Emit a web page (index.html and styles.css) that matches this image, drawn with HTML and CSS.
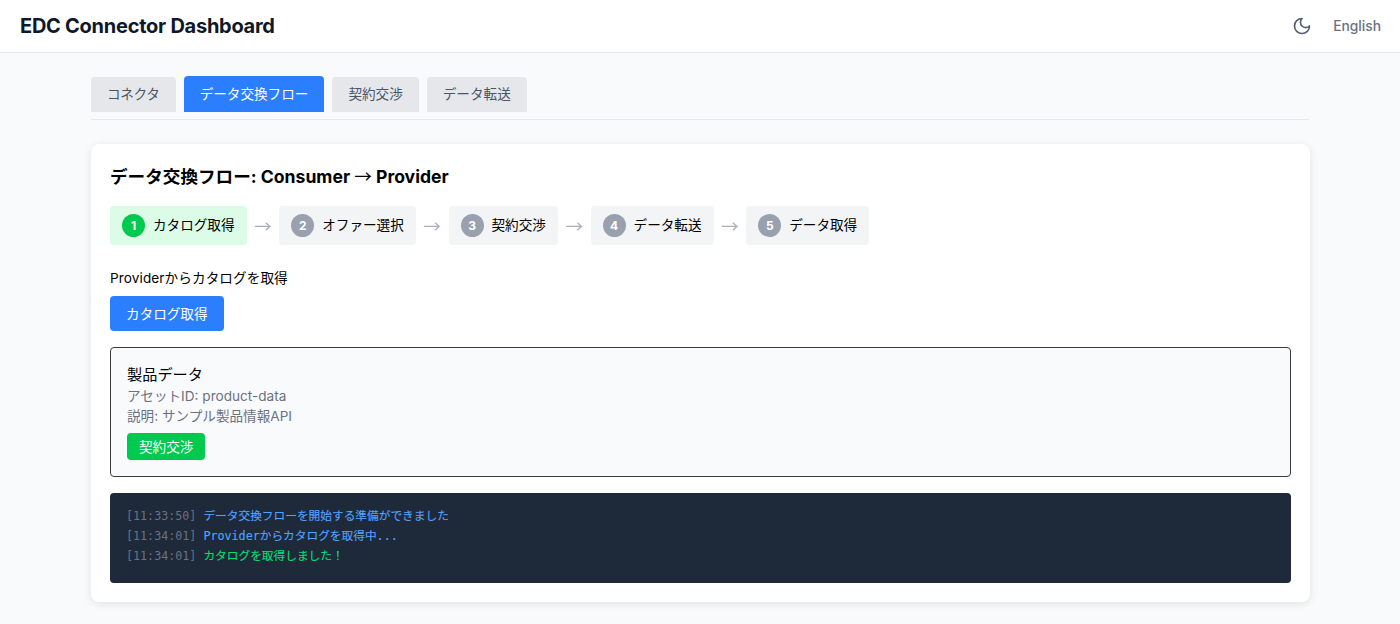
FILE: index.html
```html
<!DOCTYPE html>
<html lang="ja">
<head>
<meta charset="utf-8">
<title>EDC Connector Dashboard</title>
<link rel="stylesheet" href="styles.css">
</head>
<body>
<header class="header">
  <h1 class="brand">EDC Connector Dashboard</h1>
  <div class="header-actions">
    <svg class="moon" viewBox="0 0 24 24" width="20" height="20" fill="none" stroke="currentColor" stroke-width="2" stroke-linecap="round" stroke-linejoin="round"><path d="M12 3a6 6 0 0 0 9 9 9 9 0 1 1-9-9Z"/></svg>
    <span class="lang">English</span>
  </div>
</header>
<main class="main">
  <nav class="tabs">
    <button class="tab">コネクタ</button>
    <button class="tab tab-active">データ交換フロー</button>
    <button class="tab">契約交渉</button>
    <button class="tab">データ転送</button>
  </nav>
  <section class="card">
    <h2 class="card-title">データ交換フロー: Consumer <span class="thin-arrow">→</span> Provider</h2>
    <div class="steps">
      <div class="step step-active"><span class="num">1</span><span>カタログ取得</span></div>
      <span class="arrow">→</span>
      <div class="step"><span class="num">2</span><span>オファー選択</span></div>
      <span class="arrow">→</span>
      <div class="step"><span class="num">3</span><span>契約交渉</span></div>
      <span class="arrow">→</span>
      <div class="step"><span class="num">4</span><span>データ転送</span></div>
      <span class="arrow">→</span>
      <div class="step"><span class="num">5</span><span>データ取得</span></div>
    </div>
    <p class="desc">Providerからカタログを取得</p>
    <button class="btn-primary">カタログ取得</button>
    <div class="asset">
      <h3 class="asset-name">製品データ</h3>
      <p class="asset-line">アセットID: product-data</p>
      <p class="asset-line">説明: サンプル製品情報API</p>
      <button class="btn-success">契約交渉</button>
    </div>
    <div class="log">
      <div class="log-line"><span class="time">[11:33:50]</span> <span class="info">データ交換フローを開始する準備ができました</span></div>
      <div class="log-line"><span class="time">[11:34:01]</span> <span class="info">Providerからカタログを取得中...</span></div>
      <div class="log-line"><span class="time">[11:34:01]</span> <span class="ok">カタログを取得しました！</span></div>
    </div>
  </section>
</main>
</body>
</html>
```
FILE: styles.css
```css
* { box-sizing: border-box; }
html, body { margin: 0; padding: 0; }
body {
  background: #f9fafb;
  color: #000;
  font-family: Inter, "Noto Sans CJK JP", sans-serif;
  font-size: 13.6px;
  min-height: 624px;
}
button { font-family: inherit; border: 0; cursor: pointer; }
h1, h2, h3, p { margin: 0; }

.header {
  height: 53px;
  background: #fff;
  border-bottom: 1px solid #e5e7eb;
  display: flex;
  align-items: center;
  justify-content: space-between;
  padding: 0 19px 0 20px;
}
.brand { font-size: 20px; font-weight: 700; color: #101828; line-height: 28px; letter-spacing: -0.26px; }
.header-actions { display: flex; align-items: center; gap: 21.5px; color: #566072; }
.moon { display: block; margin-top: -1px; }
.lang { font-size: 13.8px; font-weight: 500; color: #6a7282; line-height: 20px; }

.main { width: 1218px; margin: 0 0 0 91px; padding-top: 23px; }
.tabs {
  display: flex;
  align-items: flex-end;
  gap: 8px;
  padding-bottom: 7px;
  border-bottom: 1px solid #e5e7eb;
  margin-bottom: 24px;
}
.tab {
  height: 35px;
  padding: 0 16px 3px;
  background: #e5e7eb;
  color: #4a5565;
  font-size: 13.6px;
  border-radius: 4px 4px 0 0;
}
.tab:first-child { letter-spacing: -0.3px; }
.tab-active { height: 36px; padding-bottom: 2px; background: #2b7fff; color: #fff; }

.card {
  width: 1219px;
  height: 458px;
  background: #fff;
  border-radius: 8px;
  box-shadow: 0 2px 8px rgba(0,0,0,.1);
  padding: 20px 19px;
}
.card-title { font-size: 17.6px; font-weight: 700; line-height: 26px; color: #000; margin-bottom: 16px; }
.thin-arrow { font-family: "Noto Sans CJK JP", sans-serif; font-weight: 400; line-height: 1; }
.steps { display: flex; align-items: center; }
.step {
  display: flex;
  align-items: center;
  gap: 8px;
  height: 39px;
  padding: 0 12px;
  background: #f3f4f6;
  border-radius: 4px;
  font-size: 13.6px;
  line-height: 20px;
}
.step span:last-child { padding-bottom: 2px; }
.step-active { background: #dcfce7; }
.step .num {
  width: 23px;
  height: 23px;
  padding: 0;
  border-radius: 50%;
  background: #99a1af;
  color: #fff;
  font-size: 12px;
  font-weight: 700;
  display: flex;
  align-items: center;
  justify-content: center;
}
.step-active .num { background: #00c950; }
.arrow {
  width: 32.7px;
  text-align: center;
  color: #aab0bc;
  font-family: "Noto Sans CJK JP", sans-serif;
  font-size: 17.6px;
  line-height: 39px;
}

.desc { font-size: 13.6px; line-height: 20px; letter-spacing: 0.1px; margin-top: 23px; }
.btn-primary {
  display: block;
  height: 35px;
  padding: 0 16px 2px;
  margin-top: 8px;
  background: #2b7fff;
  color: #fff;
  font-size: 13.6px;
  border-radius: 4px;
}
.asset {
  height: 130px;
  margin-top: 16px;
  padding: 17px 16px 16px;
  background: #f9fafb;
  border: 1px solid #3a3a3a;
  border-radius: 4px;
}
.asset-name { font-size: 15.2px; font-weight: 400; line-height: 20px; margin-bottom: 1px; }
.asset-line { font-size: 13.6px; line-height: 20px; color: #6a7282; }
.btn-success {
  display: block;
  height: 27px;
  padding: 0 12px 2px;
  margin-top: 7px;
  background: #00c950;
  color: #fff;
  font-size: 13.6px;
  border-radius: 4px;
}
.log {
  height: 90px;
  margin-top: 16px;
  padding: 13px 16px;
  background: #1e2939;
  border-radius: 4px;
  font-family: "DejaVu Sans Mono", "Noto Sans CJK JP", monospace;
  font-size: 11.7px;
  line-height: 20px;
}
.log-line { white-space: pre; }
.time { color: #6a7282; }
.info { color: #51a2ff; -webkit-text-stroke: 0.15px #51a2ff; }
.ok { color: #05df72; -webkit-text-stroke: 0.15px #05df72; }
```
